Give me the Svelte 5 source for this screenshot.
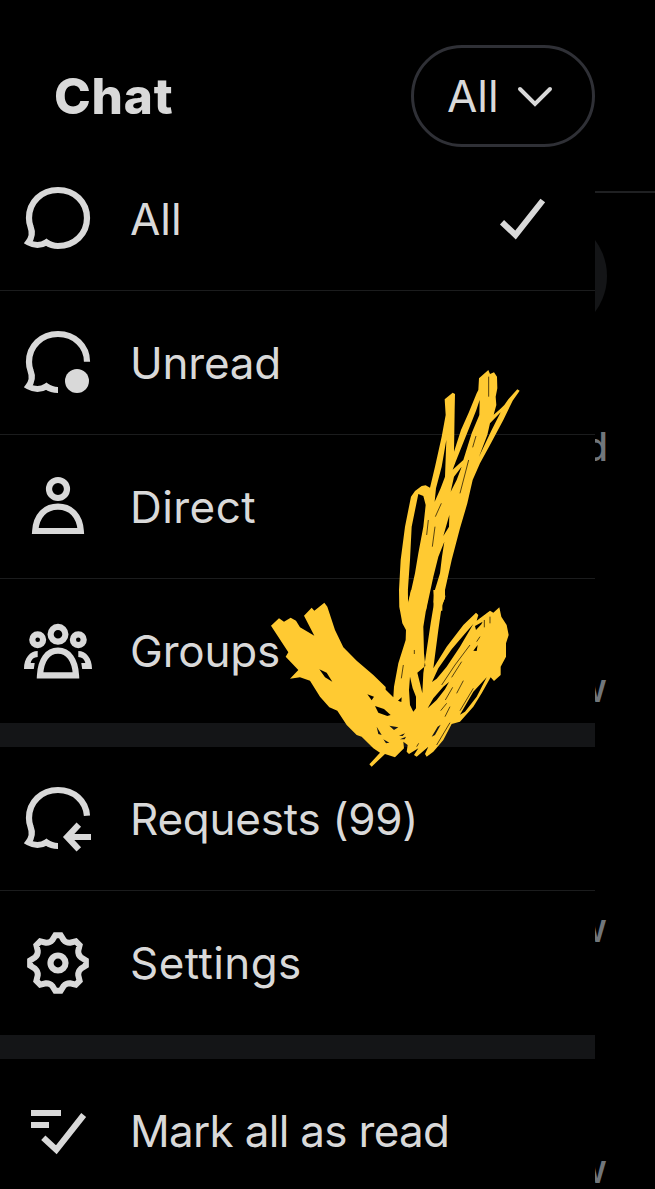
<script>
  const groups = [
    [
      { icon: 'chat', label: 'All', spacing: 0, selected: true },
      { icon: 'unread', label: 'Unread', spacing: -0.2 },
      { icon: 'person', label: 'Direct', spacing: 0.45 },
      { icon: 'people', label: 'Groups', spacing: -0.2 },
    ],
    [
      { icon: 'request', label: 'Requests (99)', spacing: -0.25 },
      { icon: 'gear', label: 'Settings', spacing: 0.4 },
    ],
    [{ icon: 'read', label: 'Mark all as read', spacing: -0.7 }],
  ];

  const tail = 'C31 64 28 63 24.3 60.3 C19 63.6 12 63.6 6.4 60.4 C10.4 55 10.6 50 8.6 45 C7.5 42 7 39.5 7 36 C7 20 19.5 8 36 8';

  // Eight-toothed cog outline around (36, 36)
  const at = (r, deg) => {
    const a = ((deg - 90) * Math.PI) / 180;
    return `${(36 + r * Math.cos(a)).toFixed(2)} ${(36 + r * Math.sin(a)).toFixed(2)}`;
  };
  let cog = '';
  for (let i = 0; i < 8; i++) {
    const d = i * 45;
    cog += `${i ? 'L' : 'M'}${at(28, d - 5.5)} L${at(28, d + 5.5)} L${at(23.6, d + 14)} Q${at(21.6, d + 22.5)} ${at(23.6, d + 31)} `;
  }
  cog += 'Z';
</script>

<div class="page">
  <header>
    <h1>Chat</h1>
    <button class="filter">
      <span>All</span>
      <svg width="36" height="24" viewBox="0 0 36 24"><path d="M3 5 L18 20 L33 5" stroke-width="4" stroke-linecap="round" /></svg>
    </button>
  </header>

  <main>
    <nav>
      {#each groups as group}
        <ul>
          {#each group as item}
            <li>
              <svg class="icon" width="72" height="72" viewBox="0 0 72 72">
                {#if item.icon === 'chat'}
                  <path transform="translate(0 -1)" d="M36 8 C52.500 8 65 20 65 36 C65 52 52.500 64 36 64 {tail}" />
                {:else if item.icon === 'unread'}
                  <g transform="translate(0 -1)">
                    <path d="M36 64 {tail} C52.500 8 65 20 65 35.700" />
                    <circle class="solid" cx="55" cy="55" r="12" />
                  </g>
                {:else if item.icon === 'request'}
                  <g transform="translate(0 -1)">
                    <path d="M36 64 {tail} C52 8 64 19 65 33.700" />
                    <path d="M56.800 42.700 L45.200 55 L56.800 67.300 M45.200 55 H69" />
                  </g>
                {:else if item.icon === 'person'}
                  <g transform="translate(0 -1)">
                    <circle cx="36" cy="19" r="9" />
                    <path d="M13.200 61 H58.800 C57.800 46 49 36.700 36 36.700 S14.200 46 13.200 61 Z" />
                  </g>
                {:else if item.icon === 'people'}
                  <g transform="translate(0 -1)">
                    <circle cx="36" cy="20.300" r="7.400" />
                    <circle cx="15.700" cy="25.700" r="5.400" />
                    <circle cx="56.300" cy="25.700" r="5.400" />
                    <path d="M18 61.300 H54 C53.200 46 46.500 36.700 36 36.700 S18.800 46 18 61.300 Z" />
                    <path class="solid" d="M15.700 37 C8 37 2 44 2 55 H11.800 L12.700 49 H8.700 C9.500 45 12 43.300 15.700 43 Z" />
                    <path class="solid" d="M56.300 37 C64 37 70 44 70 55 H60.200 L59.300 49 H63.300 C62.500 45 60 43.300 56.300 43 Z" />
                  </g>
                {:else if item.icon === 'gear'}
                  <path d={cog} stroke-width="6" />
                  <circle cx="36" cy="36" r="7.500" />
                {:else}
                  <path d="M9 18 H39 M9 30 H27 M21.300 42.700 L34.300 54.800 L61.700 20" />
                {/if}
              </svg>
              <span class="label" style="letter-spacing: {item.spacing}px">{item.label}</span>
              {#if item.selected}
                <svg class="tick" width="48" height="48" viewBox="0 0 48 48"><path d="M3 27.300 L16.500 40 L43.800 5.500" stroke-width="6" /></svg>
              {/if}
            </li>
          {/each}
        </ul>
      {/each}
    </nav>
    <aside>
      <div class="avatar"></div>
      <p class="first">d</p>
      <p>w</p>
      <p>w</p>
      <p>w</p>
    </aside>
  </main>

  <svg class="scribble" width="655" height="1189" viewBox="0 0 655 1189">
    <g transform="translate(380 360) scale(.33333)">
      <path d="M297 55 L325 30 L330 42 L342 37 L351 50 L352 85 L347 110 L349 135 L341 164 L360 148 L373 135 L385 118 L412 88 L419 92 L398 122 L370 180 L330 255 L300 310 L278 360 L262 430 L240 505 L215 600 L195 690 L195 715 L187 733 L187 752 L163 752 L160 725 L163 695 L180 640 L186 590 L193 545 L175 590 L160 650 L145 720 L138 752 H60 L57 690 L62 600 L75 500 L93 410 L105 393 L125 378 L137 376 L150 383 L165 320 L185 230 L197 165 L194 118 L218 98 L225 102 L224 150 L222 275 L243 210 L266 158 L290 100 L295 90 Z
        M299 120 L289 150 L269 200 L247 255 L227 305 L218 329 L250 300 L275 220 L298 165 Z
        M199 240 L185 320 L168 385 L164 425 L182 385 L195 350 Z
        M115 402 L130 408 L137 435 L130 500 L115 580 L105 640 L85 730 L83 700 L90 600 L95 500 Z
        M245 320 L222 350 L212 395 L230 360 Z
        M362 157 L330 190 L322 225 L297 290 L335 210 Z M208 465 L190 528 L207 500 Z" />
      <path class="gap" d="M326 50 V110 M288 228 L278 262 M266 300 L240 400 M184 430 L166 470 M165 500 L157 560 M145 480 L140 525" />
    </g>
    <g transform="translate(260 590) scale(.33333)">
      <path d="M33 107 L57 85 L72 95 L92 83 L108 92 L120 112 L163 137 L132 77 L155 53 L163 62 L193 38 L202 50 L225 120 L250 172 L290 212 L340 255 L377 291 L377 299 L400 322 L402 290 L415 220 L437 150 L438 120 L427 100 L418 50 L418 0 L443 0 L444 40 L453 0 L508 0 L498 60 L490 110 L492 190 L496 228 L472 248 L480 280 L487 310 L490 250 L500 180 L512 100 L522 40 L520 0 L553 0 L556 20 L545 50 L535 120 L520 235 L560 170 L610 105 L648 68 L655 75 L650 92 L690 62 L700 68 L718 52 L724 80 L740 105 L746 135 L738 160 L738 200 L722 230 L722 255 L702 273 L692 262 L665 310 L640 350 L600 395 L575 402 L550 450 L520 485 L500 500 L495 492 L505 470 L470 500 L462 495 L475 475 L447 492 L440 485 L443 465 L430 455 L432 475 L405 502 L375 492 L335 530 L328 523 L360 488 L340 475 L305 440 L290 435 L260 405 L232 362 L208 352 L180 320 L150 272 L120 262 L90 266 L115 240 L77 200 L85 187 Z
        M178 238 L200 248 L217 275 L195 262 Z M322 313 L342 320 L335 331 Z M345 348 L372 357 L392 375 L382 378 L355 368 Z
        M388 407 L415 412 L402 420 Z M350 410 L365 435 L355 432 Z M370 448 L388 458 L378 460 Z
        M450 260 L458 295 L468 320 L468 355 L460 365 L450 345 L447 300 Z M425 322 L424 336 L414 332 Z
        M516 276 L535 235 L575 178 L612 134 L640 102 L600 170 L560 230 L530 266 Z
        M503 355 L520 325 L550 290 L567 276 L555 298 L530 330 Z M645 108 L668 95 L664 103 L648 120 Z
        M600 374 L640 305 L680 262 L650 320 L615 365 Z M515 440 L533 410 L542 404 L525 435 Z M640 182 L653 165 L650 183 Z
        M417 437 L435 430 L428 438 Z M420 448 L438 440 L434 448 Z" />
      <path class="gap" d="M545 285 L585 225 L630 165 M575 262 L605 215 M556 330 L578 292 M542 362 L560 340 M590 310 L610 272 M600 362 L640 295 M555 380 L570 350 M530 465 L570 398 M470 470 L476 460 M430 225 L424 265 M463 180 V192 M650 155 L660 140 M673 90 V112 M690 80 V100" />
    </g>
  </svg>
</div>

<style>
  :global(body) { margin: 0; background: #000; }
  .page {
    position: relative;
    width: 655px;
    height: 1189px;
    overflow: hidden;
    background: #000;
    color: #d9d9d9;
    font-family: Inter, "Liberation Sans", sans-serif;
  }
  header {
    box-sizing: border-box;
    display: flex;
    align-items: center;
    justify-content: space-between;
    width: 595px;
    height: 147px;
    padding: 45px 0 0 54px;
  }
  h1 { margin: 0; font-size: 49.5px; line-height: 60px; font-weight: 850; letter-spacing: 0.8px; }
  .filter {
    box-sizing: border-box;
    display: flex;
    align-items: center;
    justify-content: space-between;
    width: 184px;
    height: 102px;
    padding: 0 39px 0 33px;
    border: 3px solid #2f3036;
    border-radius: 51px;
    background: none;
    color: inherit;
    font: 400 44px/60px Inter, "Liberation Sans", sans-serif;
  }
  svg { flex: none; fill: none; stroke: #d9d9d9; stroke-width: 6.2; }
  .solid { fill: #d9d9d9; stroke: none; }
  main { display: grid; grid-template-columns: 595px 60px; }
  ul { margin: 0; padding: 0; list-style: none; }
  ul + ul { border-top: 24px solid #141517; }
  li {
    box-sizing: border-box;
    display: flex;
    align-items: center;
    height: 144px;
    padding: 0 48px 0 22px;
  }
  li:not(:last-child) { box-shadow: inset 0 -1px #1b1c1d; }
  .label { margin-left: 36px; font-size: 44px; line-height: 60px; white-space: nowrap; }
  .tick { margin-left: auto; }
  aside {
    box-sizing: border-box;
    height: 1042px;
    padding-top: 44px;
    overflow: hidden;
    display: flex;
    flex-direction: column;
    align-items: flex-end;
    background: linear-gradient(#1f2022, #1f2022) 0 44px / 60px 2px no-repeat;
  }
  .avatar { flex: none; width: 120px; height: 120px; margin: 25px 48px 0 0; border-radius: 50%; background: #141517; }
  p { margin: 192.5px 48px 0 0; font-size: 39px; line-height: 48px; font-weight: 500; color: #71767b; }
  p.first { margin: 87px 47px 0 0; }
  .scribble { position: absolute; inset: 0; fill: #ffca32; stroke: none; pointer-events: none; fill-rule: evenodd; }
  .scribble .gap { fill: none; stroke: #4a380c; stroke-width: 2.8; }
</style>
